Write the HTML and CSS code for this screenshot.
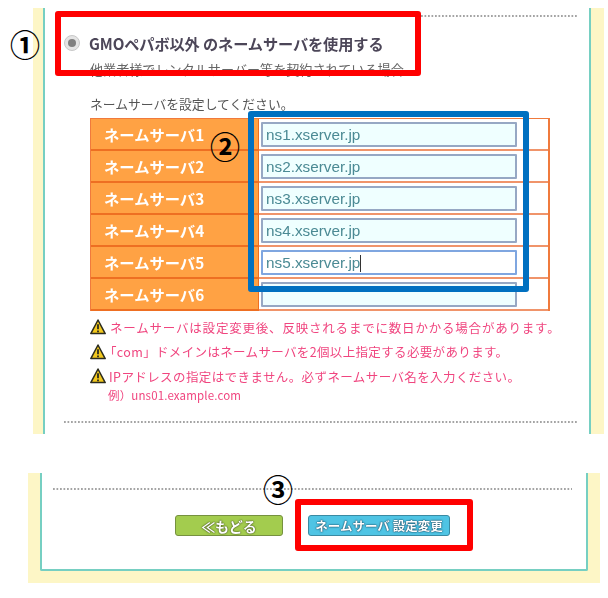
FILE: index.html
```html
<!DOCTYPE html>
<html lang="ja">
<head>
<meta charset="utf-8">
<title>ネームサーバ設定変更</title>
<link rel="stylesheet" href="styles.css">
</head>
<body>
<section class="panel panel-top">
  <div class="inner inner-top">
    <div class="dots dots-a"></div>
    <div class="choice">
      <span class="radio"><span class="radio-dot"></span></span>
      <strong class="choice-title">GMOペパボ以外 のネームサーバを使用する</strong>
    </div>
    <p class="choice-sub">他業者様でレンタルサーバー等を契約されている場合</p>
    <p class="lead">ネームサーバを設定してください。</p>
    <div class="ns-table">
      <div class="ns-label">ネームサーバ1</div><div class="ns-cell"><input class="ns-input" value="ns1.xserver.jp"></div>
      <div class="ns-label">ネームサーバ2</div><div class="ns-cell"><input class="ns-input" value="ns2.xserver.jp"></div>
      <div class="ns-label">ネームサーバ3</div><div class="ns-cell"><input class="ns-input" value="ns3.xserver.jp"></div>
      <div class="ns-label">ネームサーバ4</div><div class="ns-cell"><input class="ns-input" value="ns4.xserver.jp"></div>
      <div class="ns-label">ネームサーバ5</div><div class="ns-cell"><div class="ns-input ns-focus">ns5.xserver.jp<span class="caret"></span></div></div>
      <div class="ns-label">ネームサーバ6</div><div class="ns-cell"><input class="ns-input" value=""></div>
    </div>
    <ul class="notes">
      <li class="note"><svg class="warn" viewBox="0 0 16 16"><path d="M8 1 15.2 14.6H.8Z" fill="#f2c81e" stroke="#2b2b1e" stroke-width="1.5" stroke-linejoin="round"/><path d="M8 5.2v5M8 11.6v1.6" stroke="#2b2b1e" stroke-width="1.8"/></svg><span class="note-a">ネームサーバは設定変更後、反映されるまでに数日かかる場合があります。</span></li>
      <li class="note"><svg class="warn" viewBox="0 0 16 16"><path d="M8 1 15.2 14.6H.8Z" fill="#f2c81e" stroke="#2b2b1e" stroke-width="1.5" stroke-linejoin="round"/><path d="M8 5.2v5M8 11.6v1.6" stroke="#2b2b1e" stroke-width="1.8"/></svg><span class="note-b">「com」ドメインはネームサーバを2個以上指定する必要があります。</span></li>
      <li class="note"><svg class="warn" viewBox="0 0 16 16"><path d="M8 1 15.2 14.6H.8Z" fill="#f2c81e" stroke="#2b2b1e" stroke-width="1.5" stroke-linejoin="round"/><path d="M8 5.2v5M8 11.6v1.6" stroke="#2b2b1e" stroke-width="1.8"/></svg><span class="note-c">IPアドレスの指定はできません。必ずネームサーバ名を入力ください。</span></li>
      <li class="note-example">例）uns01.example.com</li>
    </ul>
    <div class="dots dots-b"></div>
  </div>
</section>
<section class="panel panel-bottom">
  <div class="inner inner-bottom">
    <div class="dots dots-c"></div>
    <div class="buttons">
      <a class="btn btn-back">≪もどる</a>
      <a class="btn btn-submit">ネームサーバ 設定変更</a>
    </div>
  </div>
</section>

<div class="mark mark-red-top"></div>
<div class="mark mark-blue"></div>
<div class="mark mark-red-bottom"></div>
<span class="num num-1">①</span>
<span class="num num-2">②</span>
<span class="num num-3">③</span>
</body>
</html>
```

FILE: styles.css
```css
* { box-sizing: border-box; }
html, body { margin: 0; padding: 0; background: #fff; }
body {
  position: relative;
  width: 608px;
  height: 598px;
  overflow: hidden;
  font-family: "Noto Sans CJK JP", "Noto Sans", sans-serif;
  color: #555;
}
.panel { background: #fdf6c6; filter: blur(0.35px); }
.panel-top {
  margin: 8px 0 0 33px;
  width: 571px;
  height: 426px;
  padding: 0 13px 0 10px;
}
.panel-bottom {
  margin: 39px 0 0 28px;
  width: 572px;
  height: 110px;
  padding: 0 12px 12px 12px;
}
.inner { background: #fff; border: solid #76cfc2; height: 100%; }
.inner-top { border-width: 0 2px; padding: 7px 12px 0 19px; }
.inner-bottom { border-width: 0 2px 2px; padding-top: 15px; border-radius: 0 0 2px 2px; }
.dots { height: 2px; background: radial-gradient(circle at 1px 1px, #a4a4a4 0.85px, transparent 1.1px) 0 0 / 3.5px 2px repeat-x; }
.dots-a { margin-left: 280px; }
.dots-b { margin-top: 18px; }
.dots-c { margin: 0 14px 0 11px; }

.choice { display: flex; align-items: center; margin-top: 16px; height: 20px; }
.radio {
  width: 16px; height: 16px; border-radius: 50%;
  background: #e4e4e4; border: 1px solid #c8c8c8;
  display: flex; align-items: center; justify-content: center;
  margin-right: 9px;
}
.radio-dot { width: 8px; height: 8px; border-radius: 50%; background: #808080; }
.choice-title { font-size: 15.2px; line-height: 20px; color: #4c4658; font-weight: 700; letter-spacing: -0.1px; white-space: nowrap; }
.choice-sub { margin: 8px 0 0 26px; font-size: 13.1px; line-height: 18px; color: #666; white-space: nowrap; }
.lead { margin: 16px 0 0 26px; font-size: 12.8px; line-height: 18px; color: #555; white-space: nowrap; }

.ns-table {
  margin: 5px 0 0 26px;
  width: 460px;
  display: grid;
  grid-template-columns: 168px 1fr;
  grid-auto-rows: 32px;
  border: solid #f07a3c;
  border-width: 1px 2px 0 1px;
}
.ns-label {
  background: #ffa244;
  border-right: 1px solid #ee6f22;
  border-bottom: 2px solid #ee6f22;
  color: #fff;
  font-size: 15.3px;
  font-weight: 700;
  line-height: 30px;
  padding-left: 13px;
  white-space: nowrap;
}
.ns-cell { border-bottom: 2px solid #f0946a; padding: 3px 0 0 2px; }
.ns-input {
  display: block;
  width: 256px;
  height: 25px;
  padding: 0 3px;
  border: 2px solid #96a8c4;
  border-radius: 1px;
  background: #efffff;
  color: #4b8a94;
  font: 15.3px/21px "Liberation Sans", sans-serif;
  outline: none;
}
.ns-focus { background: #fff; border-color: #7fa6e0; }
.caret { display: inline-block; width: 1px; height: 17px; background: #333; vertical-align: -4px; }

.notes { list-style: none; margin: 4px 0 0 26px; padding: 0; }
.note { display: flex; align-items: center; height: 24.5px; font-size: 12.5px; color: #f0457f; white-space: nowrap; }
.warn { width: 16px; height: 16px; flex: none; margin-right: 3px; }
.note-a { letter-spacing: 0.8px; margin-left: 1px; }
.note-b { letter-spacing: 0.35px; margin-left: -5px; }
.note-c { letter-spacing: 0.4px; }
.note-example { font-size: 11.5px; line-height: 16px; color: #f0457f; margin: -2px 0 0 18px; letter-spacing: 0.15px; }

.buttons { display: flex; margin: 25px 0 0 133px; gap: 25px; }
.btn {
  height: 21px;
  border-radius: 3px;
  display: flex; align-items: center; justify-content: center;
  font-weight: 700; white-space: nowrap;
}
.btn-back { width: 108px; font-size: 14px; background: #a3cc4e; border: 1px solid #76913f; color: #fff; text-shadow: 0 0 2px #3d4c18, 0 0 1px #3d4c18; }
.btn-submit { width: 142px; font-size: 12.5px; background: #4fc4e4; border: 1px solid #3a8aa2; color: #fff; text-shadow: 0 0 2px #0f3a52, 0 0 1px #0f3a52; }

.mark { position: absolute; border-radius: 3px; pointer-events: none; }
.mark-red-top { left: 55px; top: 11px; width: 366px; height: 65px; border: 6px solid #f00; }
.mark-blue { left: 248px; top: 111px; width: 281px; height: 181px; border: 6px solid #0070c0; }
.mark-red-bottom { left: 295px; top: 499px; width: 178px; height: 52px; border: 6px solid #f00; }
.num { position: absolute; font: 700 30px/30px "Noto Sans CJK JP", sans-serif; color: #000; }
.num-1 { left: 10px; top: 28px; }
.num-2 { left: 210px; top: 130px; }
.num-3 { left: 263px; top: 473px; }
```
